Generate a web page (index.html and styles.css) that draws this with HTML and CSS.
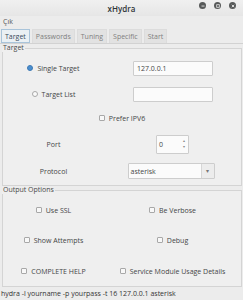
FILE: index.html
```html
<!DOCTYPE html>
<html>
<head>
<meta charset="utf-8">
<link rel="stylesheet" href="styles.css">
</head>
<body>
<div class="window">
  <div class="titlebar">
    <span class="title">xHydra</span>
    <div class="wbtns">
      <span class="wbtn"><svg width="6" height="6" viewBox="0 0 6 6"><rect x="1.5" y="2.6" width="3" height="0.9" fill="#e8e8e8"/></svg></span>
      <span class="wbtn"><svg width="6" height="6" viewBox="0 0 6 6"><rect x="1.7" y="1.7" width="2.6" height="2.6" fill="none" stroke="#e8e8e8" stroke-width="0.8"/></svg></span>
      <span class="wbtn"><svg width="6" height="6" viewBox="0 0 6 6"><path d="M1.8 1.8L4.2 4.2M4.2 1.8L1.8 4.2" stroke="#e8e8e8" stroke-width="0.9"/></svg></span>
    </div>
  </div>
  <div class="menubar"><span>Çık</span></div>
  <div class="tabs">
    <span class="tab active">Target</span>
    <span class="tab">Passwords</span>
    <span class="tab">Tuning</span>
    <span class="tab">Specific</span>
    <span class="tab">Start</span>
  </div>
  <div class="page">
    <fieldset class="frame target">
      <legend>Target</legend>
      <div class="grid tgrid">
        <div class="cell"><span class="radio on"></span>Single Target</div>
        <div class="cell"><span class="entry">127.0.0.1</span></div>
        <div class="cell"><span class="radio"></span>Target List</div>
        <div class="cell"><span class="entry"></span></div>
        <div class="cell span2"><span class="check"></span>Prefer IPV6</div>
        <div class="cell">Port</div>
        <div class="cell"><span class="spin"><span class="spinval">0</span><span class="spinbtns"><span>&#9652;</span><span>&#9662;</span></span></span></div>
        <div class="cell">Protocol</div>
        <div class="cell"><span class="combo"><span class="comboval">asterisk</span><span class="comboarrow">&#9662;</span></span></div>
      </div>
    </fieldset>
    <fieldset class="frame output">
      <legend>Output Options</legend>
      <div class="grid ogrid">
        <div class="cell"><span class="check"></span>Use SSL</div>
        <div class="cell"><span class="check"></span>Be Verbose</div>
        <div class="cell"><span class="check"></span>Show Attempts</div>
        <div class="cell"><span class="check"></span>Debug</div>
        <div class="cell"><span class="check"></span>COMPLETE HELP</div>
        <div class="cell"><span class="check"></span>Service Module Usage Details</div>
      </div>
    </fieldset>
  </div>
  <div class="status">hydra -l yourname -p yourpass -t 16 127.0.0.1 asterisk</div>
</div>
</body>
</html>
```

FILE: styles.css
```css
* { box-sizing: border-box; }
html, body { margin: 0; padding: 0; }
body {
  width: 243px;
  height: 300px;
  overflow: hidden;
  background: #ececec;
  font-family: "Open Sans", "Liberation Sans", sans-serif;
  font-size: 7px;
  color: #444646;
}
.window { display: flex; flex-direction: column; height: 300px; }
.titlebar {
  height: 16px;
  display: flex;
  align-items: center;
  justify-content: center;
  position: relative;
  background: linear-gradient(#f0f0f0, #e6e6e6);
}
.title { font-size: 8px; font-weight: 600; color: #2e3436; }
.wbtns {
  position: absolute;
  right: 7px;
  top: 2px;
  display: flex;
  gap: 8px;
}
.wbtn {
  width: 7px; height: 7px; border-radius: 50%;
  background: #585a5a;
  display: flex; align-items: center; justify-content: center;
}
.wbtn svg { display: block; }
.menubar { height: 11px; padding-left: 3px; display: flex; align-items: center; color: #555; }
.tabs { display: flex; gap: 2px; padding: 2px 0 0 1px; height: 17px; border-bottom: 1px solid #d2d2d2; }
.tab {
  height: 14px;
  padding: 0 3px;
  display: flex; align-items: center;
  background: #e2e2e2;
  color: #808080;
  border: 1px solid #dcdcdc;
  border-bottom: none;
}
.tab.active { background: #eaf0f4; color: #3a4a5a; border: 1px solid #a9c4da; }
.page { flex: 1; padding: 0 1px 0 2px; display: flex; flex-direction: column; }
.frame {
  margin: 0;
  padding: 0;
  border: 1px solid #d4d4d4;
  background: #efefef;
  min-width: 0;
}
.frame legend { padding: 0 1px; margin-left: -1px; color: #4a4a4a; line-height: 8px; }
.target { height: 142px; }
.output { margin-top: 0; height: 101px; }
.grid { display: grid; grid-template-columns: 101px 1fr; }
.tgrid { grid-template-rows: 26px 26px 22px 30px 24px; padding-top: 3px; }
.ogrid { grid-template-rows: 28px 32px 30px; padding-top: 2px; }
.cell { display: flex; align-items: center; justify-content: center; white-space: nowrap; }
.span2 { grid-column: 1 / 3; }
.radio {
  width: 6px; height: 6px; border-radius: 50%;
  border: 1px solid #a8a8a8; background: #fafafa;
  margin-right: 4px;
}
.radio.on { background: #4a8fd0; border-color: #3f7ab4; }
.check {
  width: 6px; height: 6px; border: 1px solid #a8a8a8; background: #f8f8f8;
  margin-right: 4px; border-radius: 1px;
}
.entry {
  width: 80px; height: 15px; background: #fbfbfb; border: 1px solid #cdcdcd;
  display: flex; align-items: center; padding-left: 3px; margin-left: 1px;
  border-radius: 1px;
}
.spin {
  width: 33px; height: 19px; background: #fbfbfb; border: 1px solid #cdcdcd;
  display: flex; align-items: center; border-radius: 1px;
}
.spinval { flex: 1; padding-left: 2px; }
.spinbtns { width: 8px; display: flex; flex-direction: column; font-size: 4px; color: #888; line-height: 6px; align-items: center; }
.combo {
  width: 87px; height: 16px; background: #fbfbfb; border: 1px solid #cdcdcd;
  display: flex; align-items: stretch; margin-left: -3px; border-radius: 1px;
}
.comboval { flex: 1; display: flex; align-items: center; padding-left: 2px; }
.comboarrow { width: 13px; border-left: 1px solid #d6d6d6; background: #ececec; display: flex; align-items: center; justify-content: center; font-size: 6px; color: #777; }
.status { height: 13px; display: flex; align-items: center; padding-left: 1px; color: #333; }
```
